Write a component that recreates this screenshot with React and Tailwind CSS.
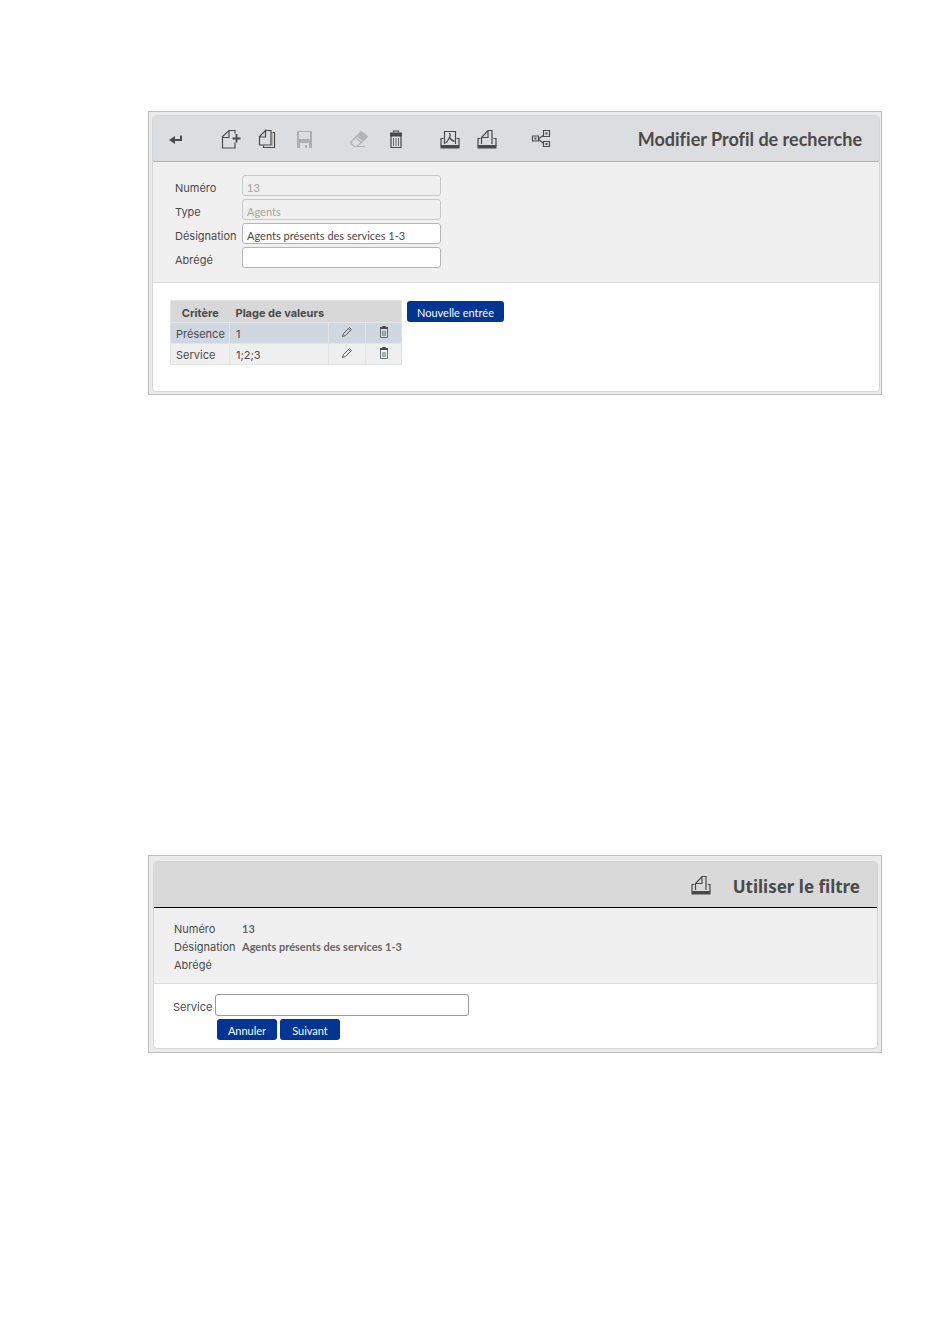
import React from 'react'

// Line drawings shared by the toolbars, all on a 24px grid
const Svg = ({ children }) => (
  <svg width="24" height="24" viewBox="0 0 24 24" fill="none" stroke="#4a4a4a" strokeWidth="1.2" aria-hidden="true">
    {children}
  </svg>
)

const BackIcon = () => (
  <Svg>
    <path d="M16 8.500V13H8" strokeWidth="2" />
    <path d="M4 13l6-4v8z" fill="#4a4a4a" stroke="none" />
  </Svg>
)

const NewIcon = () => (
  <Svg>
    <path d="M16 6.500V3.500H10L3.500 9.500v11.500H16V15.500M10 3.500v7H3.500" />
    <path d="M17.500 7v8.500M13.500 11.500h8" strokeWidth="1.8" />
  </Svg>
)

const CopyIcon = () => (
  <Svg>
    <path d="M9.500 3.500H15v14.500H3.500V9.500L9.500 3.500v6.500H3.500" />
    <path d="M16.500 5.500H18.500V20.500H7.500V18.500" />
    <path d="M15.800 5v13.500" stroke="#8a7f78" />
  </Svg>
)

const SaveIcon = () => (
  <Svg>
    <path fill="#adaeaf" stroke="none" fillRule="evenodd" d="M4 4h15v17H4zM6 5h11v7H6zM7 16h9v5h-2v-3h-2v3H7z" />
  </Svg>
)

const EraserIcon = () => (
  <Svg>
    <path d="M3.500 15.500L14 4.500l6.500 5L10 19.500H7zM8.500 10.500l6.500 5.500M10 19.500h8" stroke="#b2b3b4" />
    <path d="M10 9.500l4-5 6.500 5-4.500 5z" fill="#b2b3b4" stroke="none" />
  </Svg>
)

const TrashIcon = () => (
  <Svg>
    <path d="M9.500 5.500V4h5v1.500" />
    <path d="M6 5.500h12v4H6z" fill="#4a4a4a" stroke="none" />
    <path d="M7 9v11.500h10V9" />
    <path d="M9.500 11v8M12 11v8M14.500 11v8" strokeWidth="1" stroke="#6a6a6a" />
  </Svg>
)

const Tray = () => (
  <>
    <path d="M5.500 11.500H3v7h18v-7h-2.500" />
    <path d="M2.500 18h19v3.500h-19z" fill="#4a4a4a" stroke="none" />
  </>
)

const PdfIcon = () => (
  <Svg>
    <Tray />
    <path d="M6.500 17V4.500h11V17" />
    <path d="M11 6.500c2 0 1 3 0 5-1 2-2.500 4-3.500 4.500M11.500 10c1 2.500 3 4 5 4.500" strokeWidth="1.3" />
  </Svg>
)

const PrintIcon = () => (
  <Svg>
    <Tray />
    <path d="M6.500 17V10.500L13 3.500h4V17M13 3.500v7H6.500" />
  </Svg>
)

const TreeIcon = () => (
  <Svg>
    <path d="M9 12l7-4.500M9 12l7 5.500" />
    <path d="M3.500 9h6v5h-6zM14.500 3.500h6v6h-6zM14.500 14.500h6v5h-6z" fill="#dcddde" />
    <path d="M5.500 10.500h2v2h-2zM16.500 5.500h2v2h-2zM16.500 16h2v2h-2z" fill="#4a4a4a" stroke="none" />
  </Svg>
)

const SmallPencil = () => (
  <svg width="12" height="12" viewBox="0 0 12 12" fill="none" stroke="#4a4a4a" strokeWidth="0.9" aria-hidden="true">
    <path d="M1.500 10.500l1-3L8.500 1.500l2 2-6 6zM7.500 2.500l2 2" />
  </svg>
)

const SmallTrash = () => (
  <svg width="12" height="12" viewBox="0 0 12 12" fill="none" stroke="#4f6a68" aria-hidden="true">
    <path d="M4.500 1.500V.5h3v1" stroke="#4a4a4a" />
    <path d="M2 1h8v2H2z" fill="#4a4a4a" stroke="none" />
    <path d="M2.500 3v8.500h7V3M5 5v5M7 5v5" strokeWidth="0.9" />
  </svg>
)

const TOOLS = [
  [{ label: 'Retour', icon: BackIcon }],
  [
    { label: 'Nouveau', icon: NewIcon },
    { label: 'Copier', icon: CopyIcon },
    { label: 'Enregistrer', icon: SaveIcon, disabled: true },
  ],
  [
    { label: 'Effacer', icon: EraserIcon, disabled: true },
    { label: 'Supprimer', icon: TrashIcon },
  ],
  [
    { label: 'PDF', icon: PdfIcon },
    { label: 'Imprimer', icon: PrintIcon },
  ],
  [{ label: 'Structure', icon: TreeIcon }],
]

const FIELDS = [
  { id: 'numero', label: 'Numéro', value: '13', disabled: true },
  { id: 'type', label: 'Type', value: 'Agents', disabled: true },
  { id: 'designation', label: 'Désignation', value: 'Agents présents des services 1-3' },
  { id: 'abrege', label: 'Abrégé', value: '' },
]

const CRITERIA = [
  { name: 'Présence', range: '1', row: 'bg-[#cfd7e1]' },
  { name: 'Service', range: '1;2;3', row: 'bg-[#efefef]' },
]

const DETAILS = [
  ['Numéro', '13'],
  ['Désignation', 'Agents présents des services 1-3'],
  ['Abrégé', ''],
]

function Action({ children }) {
  return (
    <button className="h-[21px] min-w-[60px] rounded-[3px] bg-[#003594] px-[10px] pt-[3px] font-['Lato',sans-serif] leading-[18px] text-white">
      {children}
    </button>
  )
}

function EditPanel() {
  return (
    <section className="border border-[#bdbdbd] bg-[#ebebeb] pt-[3px] pr-px pb-[2px] pl-[3px]">
      <div className="overflow-hidden rounded-[4px] border border-[#d6d6d6] bg-white">
        <header className="flex h-[46px] items-center justify-between border-b border-[#b0b0b0] bg-[#dcddde] pr-[17px] pl-3">
          <div className="flex gap-[30px]">
            {TOOLS.map((group, i) => (
              <div key={i} className="flex gap-[13px]">
                {group.map(({ label, icon: Icon, disabled }) => (
                  <button key={label} aria-label={label} disabled={disabled}>
                    <Icon />
                  </button>
                ))}
              </div>
            ))}
          </div>
          <h1 className="pt-px font-['Lato',sans-serif] text-[18px] font-bold [font-variant-ligatures:none]">
            Modifier Profil de recherche
          </h1>
        </header>

        <form className="flex flex-col gap-[3px] border-b border-[#dcdcdc] bg-[#f0f0f0] pt-[13px] pb-[14px] pl-[22px]">
          {FIELDS.map(f => (
            <div key={f.id} className="flex h-[21px]">
              <label htmlFor={f.id} className="w-[67px] pt-1">{f.label}</label>
              <input
                id={f.id}
                defaultValue={f.value}
                disabled={f.disabled}
                className="h-[21px] w-[199px] rounded-[3px] border border-[#b5b5b5] bg-white px-1 pt-[3px] font-['Lato',sans-serif] disabled:border-[#c8c8c8] disabled:bg-[#efefef] disabled:text-[#a5a5a5]"
              />
            </div>
          ))}
        </form>

        <div className="flex gap-[5px] pt-[17px] pb-[26px] pl-[17px]">
          <table className="w-[231px] table-fixed border-collapse border border-[#e4e4e4] text-left">
            <colgroup>
              <col className="w-[59px]" />
              <col className="w-[99px]" />
              <col className="w-[37px]" />
              <col className="w-[36px]" />
            </colgroup>
            <thead>
              <tr className="h-[22px] bg-[#d8d8d8] whitespace-nowrap">
                <th className="pt-[2px] text-center font-bold">Critère</th>
                <th className="pt-[2px] pl-[6px] font-bold">Plage de valeurs</th>
                <th></th>
                <th></th>
              </tr>
            </thead>
            <tbody>
              {CRITERIA.map(c => (
                <tr key={c.name} className={`h-[21px] ${c.row}`}>
                  <td className="border border-[#e4e4e4] pt-[2px] pl-[5px]">{c.name}</td>
                  <td className="border border-[#e4e4e4] pt-[2px] pl-[6px]">{c.range}</td>
                  <td className="border border-[#e4e4e4] pb-[3px]">
                    <button aria-label="Modifier" className="mx-auto block"><SmallPencil /></button>
                  </td>
                  <td className="border border-[#e4e4e4] pb-[3px]">
                    <button aria-label="Supprimer" className="mx-auto block"><SmallTrash /></button>
                  </td>
                </tr>
              ))}
            </tbody>
          </table>
          <div className="pt-px">
            <Action>Nouvelle entrée</Action>
          </div>
        </div>
      </div>
    </section>
  )
}

function FilterPanel() {
  return (
    <section className="border border-[#bdbdbd] bg-[#ebebeb] pt-[5px] pr-[3px] pb-[3px] pl-1">
      <div className="overflow-hidden rounded-[4px] border border-[#d6d6d6] bg-white">
        <header className="flex h-[46px] items-center justify-end gap-5 border-b border-black bg-[#d9d9d9] pr-[17px]">
          <button aria-label="Imprimer"><PrintIcon /></button>
          <h2 className="pt-1 font-['Noto_Sans',sans-serif] text-[17px] font-bold">Utiliser le filtre</h2>
        </header>

        <dl className="border-b border-[#dcdcdc] bg-[#f0f0f0] pt-[12px] pb-[9px] pl-[20px]">
          {DETAILS.map(([label, value]) => (
            <div key={label} className="flex leading-[18px]">
              <dt className="w-[68px]">{label}</dt>
              <dd className="font-['Lato',sans-serif] font-bold text-[#666]">{value}</dd>
            </div>
          ))}
        </dl>

        <form className="pt-[10px] pb-[8px] pl-[19px]">
          <div className="flex">
            <label htmlFor="service" className="w-[42px] pt-1">Service</label>
            <input id="service" className="h-[22px] w-[254px] rounded-[3px] border border-[#999] bg-white px-1" />
          </div>
          <div className="flex gap-[3px] pt-[3px] pl-[44px]">
            <Action>Annuler</Action>
            <Action>Suivant</Action>
          </div>
        </form>
      </div>
    </section>
  )
}

export default function App() {
  return (
    <main className="flex min-h-screen flex-col gap-[460px] bg-white pt-[111px] pr-[68px] pb-16 pl-[148px] font-['Inter',sans-serif] text-[11px] leading-[18px] text-[#4a4a4a]">
      <EditPanel />
      <FilterPanel />
    </main>
  )
}
